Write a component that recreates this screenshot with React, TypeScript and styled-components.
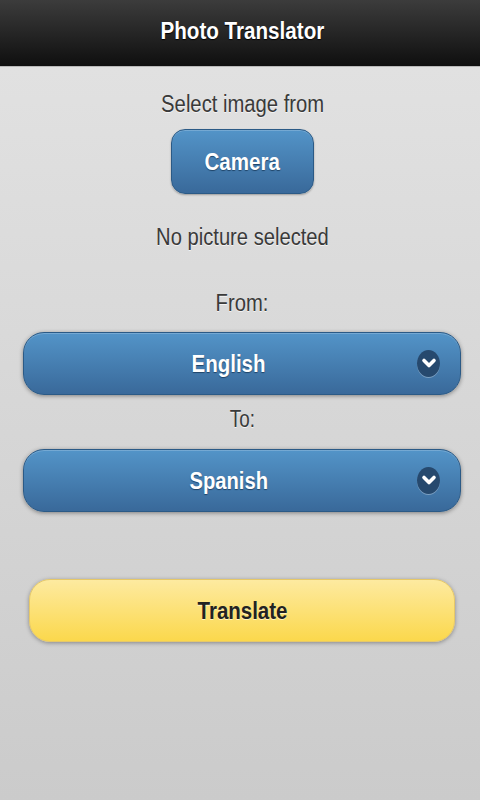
import React from "react";
import styled, { createGlobalStyle } from "styled-components";

const Global = createGlobalStyle`
  html, body { margin: 0; padding: 0; height: 100%; }
  body { font-family: "Liberation Sans", Arial, sans-serif; }
  * { box-sizing: border-box; }
`;

const Page = styled.div`
  width: 480px;
  height: 800px;
  overflow: hidden;
  display: flex;
  flex-direction: column;
  background: linear-gradient(#e3e3e3, #cbcbcb);
`;

const Header = styled.header`
  height: 66px;
  flex: none;
  display: flex;
  align-items: center;
  justify-content: center;
  padding: 0 0 4px 4px;
  background: linear-gradient(#3c3c3c, #0f0f0f);
  box-shadow: 0 1px 0 #b8b8b8;
`;

const Narrow = styled.span<{ $scale: number }>`
  display: inline-block;
  white-space: nowrap;
  transform: scaleX(${(p) => p.$scale});
`;

const Title = styled.h1`
  margin: 0;
  color: #fff;
  font-size: 23px;
  font-weight: 700;
  line-height: 26px;
  text-shadow: 0 1px 1px #000;
`;

const Content = styled.main`
  flex: 1;
  display: flex;
  flex-direction: column;
  align-items: center;
  padding: 25px 19px 0 23px;
`;

const Label = styled.p<{ $mt: number }>`
  margin: ${(p) => p.$mt}px 0 0 1px;
  color: #3a3a3a;
  font-size: 23px;
  line-height: 26px;
  text-shadow: 0 1px 0 #f3f3f3;
`;

const BlueButton = styled.button`
  margin-top: 12px;
  width: 143px;
  height: 65px;
  border: 1px solid #2b5a86;
  border-radius: 14px;
  background: linear-gradient(#5394c8, #39699a);
  box-shadow: 0 1px 2px rgba(0, 0, 0, 0.3), inset 0 1px 0 rgba(255, 255, 255, 0.2);
  color: #fff;
  font: 700 23px/26px "Liberation Sans", Arial, sans-serif;
  text-shadow: 0 1px 1px #1f4468;
  padding: 1px 0 0;
`;

const SelectBar = styled.div<{ $mt: number }>`
  margin-top: ${(p) => p.$mt}px;
  position: relative;
  width: 438px;
  height: 63px;
  display: flex;
  align-items: center;
  justify-content: center;
  padding: 1px 26px 0 0;
  border: 1px solid #2b5a86;
  border-radius: 21px;
  background: linear-gradient(#5394c8, #39699a);
  box-shadow: 0 1px 4px rgba(0, 0, 0, 0.4), inset 0 1px 0 rgba(255, 255, 255, 0.2);
  color: #fff;
  font-size: 23px;
  font-weight: 700;
  line-height: 26px;
  text-shadow: 0 1px 1px #1f4468;
`;

const Chevron = styled.span`
  position: absolute;
  right: 20px;
  top: 50%;
  width: 23px;
  height: 27px;
  margin-top: -14px;
  border-radius: 50%;
  background: #26496e;
  box-shadow: 0 1px 0 rgba(255, 255, 255, 0.3);
  display: flex;
  align-items: center;
  justify-content: center;
`;

const YellowButton = styled.button`
  margin-top: 67px;
  width: 426px;
  height: 63px;
  border: 1px solid #e6c868;
  border-radius: 21px;
  background: linear-gradient(#fdeaa0, #fbd84c);
  box-shadow: 0 1px 4px rgba(0, 0, 0, 0.35);
  color: #222;
  font: 700 23px/26px "Liberation Sans", Arial, sans-serif;
  text-shadow: 0 1px 0 #fff3c0;
  padding: 1px 0 0;
`;

const Icon = () => (
  <Chevron>
    <svg width="16" height="14" viewBox="0 0 16 14" aria-hidden="true">
      <path d="M3 4.5 L8 9.5 L13 4.5" fill="none" stroke="#fff" strokeWidth="3.6" strokeLinecap="round" strokeLinejoin="round" />
    </svg>
  </Chevron>
);

export default function App() {
  return (
    <Page>
      <Global />
      <Header>
        <Title><Narrow $scale={0.896}>Photo Translator</Narrow></Title>
      </Header>
      <Content>
        <Label $mt={0}><Narrow $scale={0.88}>Select image from</Narrow></Label>
        <BlueButton><Narrow $scale={0.893}>Camera</Narrow></BlueButton>
        <Label $mt={30}><Narrow $scale={0.877}>No picture selected</Narrow></Label>
        <Label $mt={40}><Narrow $scale={0.88}>From:</Narrow></Label>
        <SelectBar $mt={16}>
          <Narrow $scale={0.89}>English</Narrow>
          <Icon />
        </SelectBar>
        <Label $mt={11}><Narrow $scale={0.82}>To:</Narrow></Label>
        <SelectBar $mt={17}>
          <Narrow $scale={0.878}>Spanish</Narrow>
          <Icon />
        </SelectBar>
        <YellowButton><Narrow $scale={0.89}>Translate</Narrow></YellowButton>
      </Content>
    </Page>
  );
}
